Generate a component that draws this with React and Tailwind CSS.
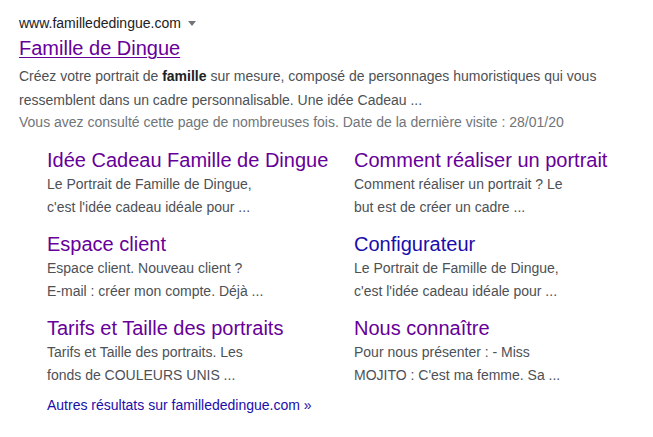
import React from 'react';

const sitelinks = [
  { title: 'Idée Cadeau Famille de Dingue', visited: true, lines: ['Le Portrait de Famille de Dingue,', "c'est l'idée cadeau idéale pour ..."] },
  { title: 'Comment réaliser un portrait', visited: true, lines: ['Comment réaliser un portrait ? Le', 'but est de créer un cadre ...'] },
  { title: 'Espace client', visited: true, lines: ['Espace client. Nouveau client ?', 'E-mail : créer mon compte. Déjà ...'] },
  { title: 'Configurateur', visited: false, lines: ['Le Portrait de Famille de Dingue,', "c'est l'idée cadeau idéale pour ..."] },
  { title: 'Tarifs et Taille des portraits', visited: true, lines: ['Tarifs et Taille des portraits. Les', 'fonds de COULEURS UNIS ...'] },
  { title: 'Nous connaître', visited: true, lines: ['Pour nous présenter : - Miss', "MOJITO : C'est ma femme. Sa ..."] },
];

function Sitelink({ item }) {
  return (
    <div className="h-[84px]">
      <a
        href="#"
        className={
          'block text-[20px] leading-[26px] ' +
          (item.visited ? 'text-[#660099]' : 'text-[#1a0dab]')
        }
      >
        {item.title}
      </a>
      <div className="text-[14px] leading-[23px] text-[#4d5156]">
        {item.lines.map((l, i) => (
          <div key={i}>{l}</div>
        ))}
      </div>
    </div>
  );
}

export default function App() {
  return (
    <div className="min-h-screen w-[653px] bg-white pl-[19px] pt-[11px] font-['Liberation_Sans',Arial,sans-serif]">
      <div className="flex items-center text-[14px] leading-[24px] text-[#202124]">
        <span>www.famillededingue.com</span>
        <span className="ml-[7px] mt-[1px] h-0 w-0 border-x-[4px] border-t-[5px] border-x-transparent border-t-[#70757a]" />
      </div>
      <a href="#" className="block text-[20px] leading-[26px] text-[#660099] underline decoration-1 underline-offset-2">
        Famille de Dingue
      </a>
      <div className="mt-[3px] w-[600px] text-[14px] leading-[24px] text-[#4d5156]">
        Créez votre portrait de <b className="text-[#202124]">famille</b> sur mesure, composé de personnages humoristiques qui vous ressemblent dans un cadre personnalisable. Une idée Cadeau ...
      </div>
      <div className="text-[14px] leading-[20px] text-[#70757a]">
        Vous avez consulté cette page de nombreuses fois. Date de la dernière visite : 28/01/20
      </div>

      <div className="mt-[15px] pl-[28px]">
        <div className="grid grid-cols-[307px_1fr]">
          {sitelinks.map((s) => (
            <Sitelink key={s.title} item={s} />
          ))}
        </div>
        <a href="#" className="block mt-[-3px] text-[14px] leading-[18px] text-[#1a0dab]">
          Autres résultats sur famillededingue.com »
        </a>
      </div>
    </div>
  );
}
